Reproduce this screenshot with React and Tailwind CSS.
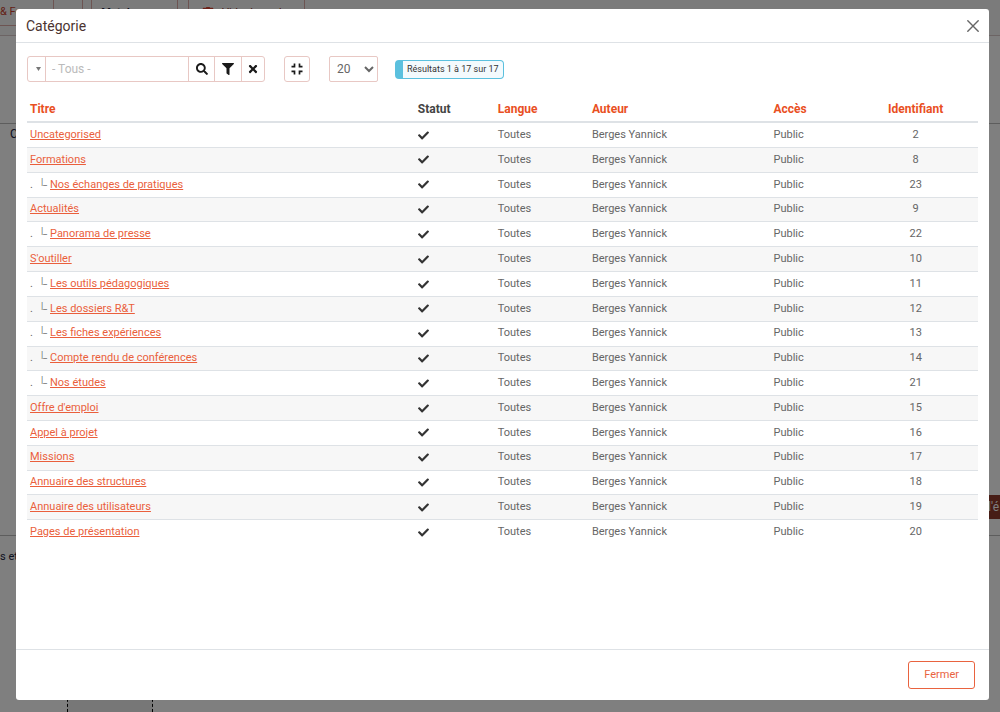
import { FaSearch, FaFilter, FaTimes, FaCheck, FaTrash } from "react-icons/fa";

const rows = [
  ["Uncategorised", 0, 2],
  ["Formations", 0, 8],
  ["Nos échanges de pratiques", 1, 23],
  ["Actualités", 0, 9],
  ["Panorama de presse", 1, 22],
  ["S'outiller", 0, 10],
  ["Les outils pédagogiques", 1, 11],
  ["Les dossiers R&T", 1, 12],
  ["Les fiches expériences", 1, 13],
  ["Compte rendu de conférences", 1, 14],
  ["Nos études", 1, 21],
  ["Offre d'emploi", 0, 15],
  ["Appel à projet", 0, 16],
  ["Missions", 0, 17],
  ["Annuaire des structures", 0, 18],
  ["Annuaire des utilisateurs", 0, 19],
  ["Pages de présentation", 0, 20],
];

function CompressIcon() {
  return (
    <svg width="12" height="12" viewBox="0 0 12 12" fill="none" stroke="currentColor" strokeWidth="1.7" aria-hidden="true">
      <path d="M.5 3.6H3.5V.6M8.5 .6V3.6H11.5M.5 8.4H3.5V11.4M11.5 8.4H8.5V11.4" />
    </svg>
  );
}

function PageBehind() {
  return (
    <div aria-hidden="true" className="flex h-screen flex-col overflow-hidden bg-white text-xs text-[#22263f]">
      <div className="flex h-9 shrink-0 border-b border-[#d8c8c8] bg-[#f7f7f7]">
        <div className="flex h-[26px] w-[54px] items-center border-r border-b border-[#dba9a4] text-[11px] whitespace-nowrap text-[#c8402e]">&amp; Fermer</div>
        <div className="ml-7 h-[26px] w-2.5 border-x border-[#dba9a4]" />
        <div className="flex h-[26px] w-[86px] items-center justify-center border-r border-[#dba9a4] text-[11px] font-bold">Mot de passe</div>
        <div className="ml-2.5 flex h-[26px] w-[117px] items-center justify-center gap-2 border-x border-[#dba9a4] text-[11px] text-[#8c2f26]">
          <FaTrash className="size-3 text-[#d9402e]" />Vider le cache
        </div>
      </div>
      <div className="h-[88px] shrink-0 border-b border-[#bbb]" />
      <div className="flex h-[412px] shrink-0 flex-col justify-between border-b border-[#bbb] pb-4">
        <span className="pt-0.5 pl-2.5">C</span>
        <span className="h-6 w-3 self-end bg-[#8f3a2c] leading-6 whitespace-nowrap text-white">l'é</span>
      </div>
      <div className="grow pt-3.5 text-[11px]">s et</div>
      <div className="ml-[67px] h-16 w-[86px] shrink-0 border-x border-dashed border-black bg-[#eee]" />
    </div>
  );
}

export default function App() {
  return (
    <div className="relative font-[Roboto,sans-serif] text-[#666]">
      <PageBehind />
      <div className="absolute inset-0 flex bg-black/50 pt-[9px] pr-[11px] pb-3 pl-4">
        <div role="dialog" aria-labelledby="dialog-title" className="flex min-w-0 grow flex-col rounded-[3px] bg-white">
          <header className="flex h-[34px] shrink-0 items-center justify-between border-b border-[#dee2e6] px-2.5">
            <h1 id="dialog-title" className="text-sm leading-5 text-[#4b3330]">Catégorie</h1>
            <button aria-label="Fermer la fenêtre" className="text-[#666]">
              <svg width="12" height="12" viewBox="0 0 12 12" stroke="currentColor" strokeWidth="1.4" strokeLinecap="round">
                <path d="M.8.8 11.2 11.2M11.2.8.8 11.2" />
              </svg>
            </button>
          </header>

          <main className="grow px-[11px] pt-[13px]">
            <form className="flex items-center" onSubmit={(e) => e.preventDefault()}>
              <div className="flex h-[26px] divide-x divide-[#e8c8c4] rounded-[3px] border border-[#e8c8c4] text-[#1a1a1a]">
                <button type="button" aria-label="Options de recherche" className="flex w-[18px] items-center justify-center pl-1">
                  <svg width="5" height="4" viewBox="0 0 5 4" fill="#777"><path d="M0 0H5L2.5 4Z" /></svg>
                </button>
                <input aria-label="Rechercher" placeholder="- Tous -" className="w-[143px] px-1.5 text-xs outline-none placeholder:text-[#bbb]" />
                <button type="submit" aria-label="Rechercher" className="flex w-[26px] items-center justify-center"><FaSearch className="size-3" /></button>
                <button type="button" aria-label="Filtrer" className="flex w-[27px] items-center justify-center"><FaFilter className="size-3" /></button>
                <button type="button" aria-label="Effacer" className="flex w-[22px] items-center justify-center"><FaTimes className="size-3" /></button>
              </div>
              <button type="button" aria-label="Réduire" className="ml-[19px] flex h-[26px] w-[26px] items-center justify-center rounded-[3px] border border-[#e8c8c4] text-[#1a1a1a]">
                <CompressIcon />
              </button>
              <select aria-label="Nombre de résultats" defaultValue="20" className="ml-[19px] h-[26px] w-[49px] rounded-[2px] border border-[#e8c8c4] bg-white pl-[3px] text-xs">
                <option>20</option>
                <option>50</option>
              </select>
              <p className="ml-[17px] h-[19px] rounded-[4px] border border-l-8 border-[#5bc0de] bg-[#f3fafd] px-1 text-[9px] leading-[17px] text-[#333]">
                Résultats 1 à 17 sur 17
              </p>
            </form>

            <table className="mt-3 h-[450px] w-full table-fixed border-collapse text-left text-[11px]">
              <colgroup>
                <col className="w-[41.1%]" />
                <col className="w-[8.4%]" />
                <col className="w-[9.9%]" />
                <col className="w-[19.1%]" />
                <col className="w-[8.4%]" />
                <col />
              </colgroup>
              <thead>
                <tr className="h-7 border-b-2 border-[#dee2e6] text-xs text-[#e9501f]">
                  <th className="pt-0.5 pl-[3px]">Titre</th>
                  <th className="pt-0.5 text-[#444]">Statut</th>
                  <th className="pt-0.5">Langue</th>
                  <th className="pt-0.5">Auteur</th>
                  <th className="pt-0.5">Accès</th>
                  <th className="pt-0.5 text-center">Identifiant</th>
                </tr>
              </thead>
              <tbody>
                {rows.map(([title, level, id]) => (
                  <tr key={id} className="border-b border-[#dee2e6] last:border-0 even:bg-[#f7f7f7]">
                    <td className="pl-[3px]">
                      {level ? (
                        <span className="inline-flex w-5 items-start gap-2 leading-4">
                          <span>.</span>
                          <span className="text-[9px] leading-[10px]">|_</span>
                        </span>
                      ) : null}
                      <a href="#" className="text-[#ea5f3c] underline">{title}</a>
                    </td>
                    <td><FaCheck aria-label="Publié" className="size-[11px] text-[#333]" /></td>
                    <td>Toutes</td>
                    <td>Berges Yannick</td>
                    <td>Public</td>
                    <td className="text-center">{id}</td>
                  </tr>
                ))}
              </tbody>
            </table>
          </main>

          <footer className="flex h-[51px] shrink-0 items-center justify-end border-t border-[#dee2e6] px-3.5">
            <button className="h-7 rounded-[3px] border border-[#e9633f] px-[15px] text-[11px] text-[#e9633f]">Fermer</button>
          </footer>
        </div>
      </div>
    </div>
  );
}
